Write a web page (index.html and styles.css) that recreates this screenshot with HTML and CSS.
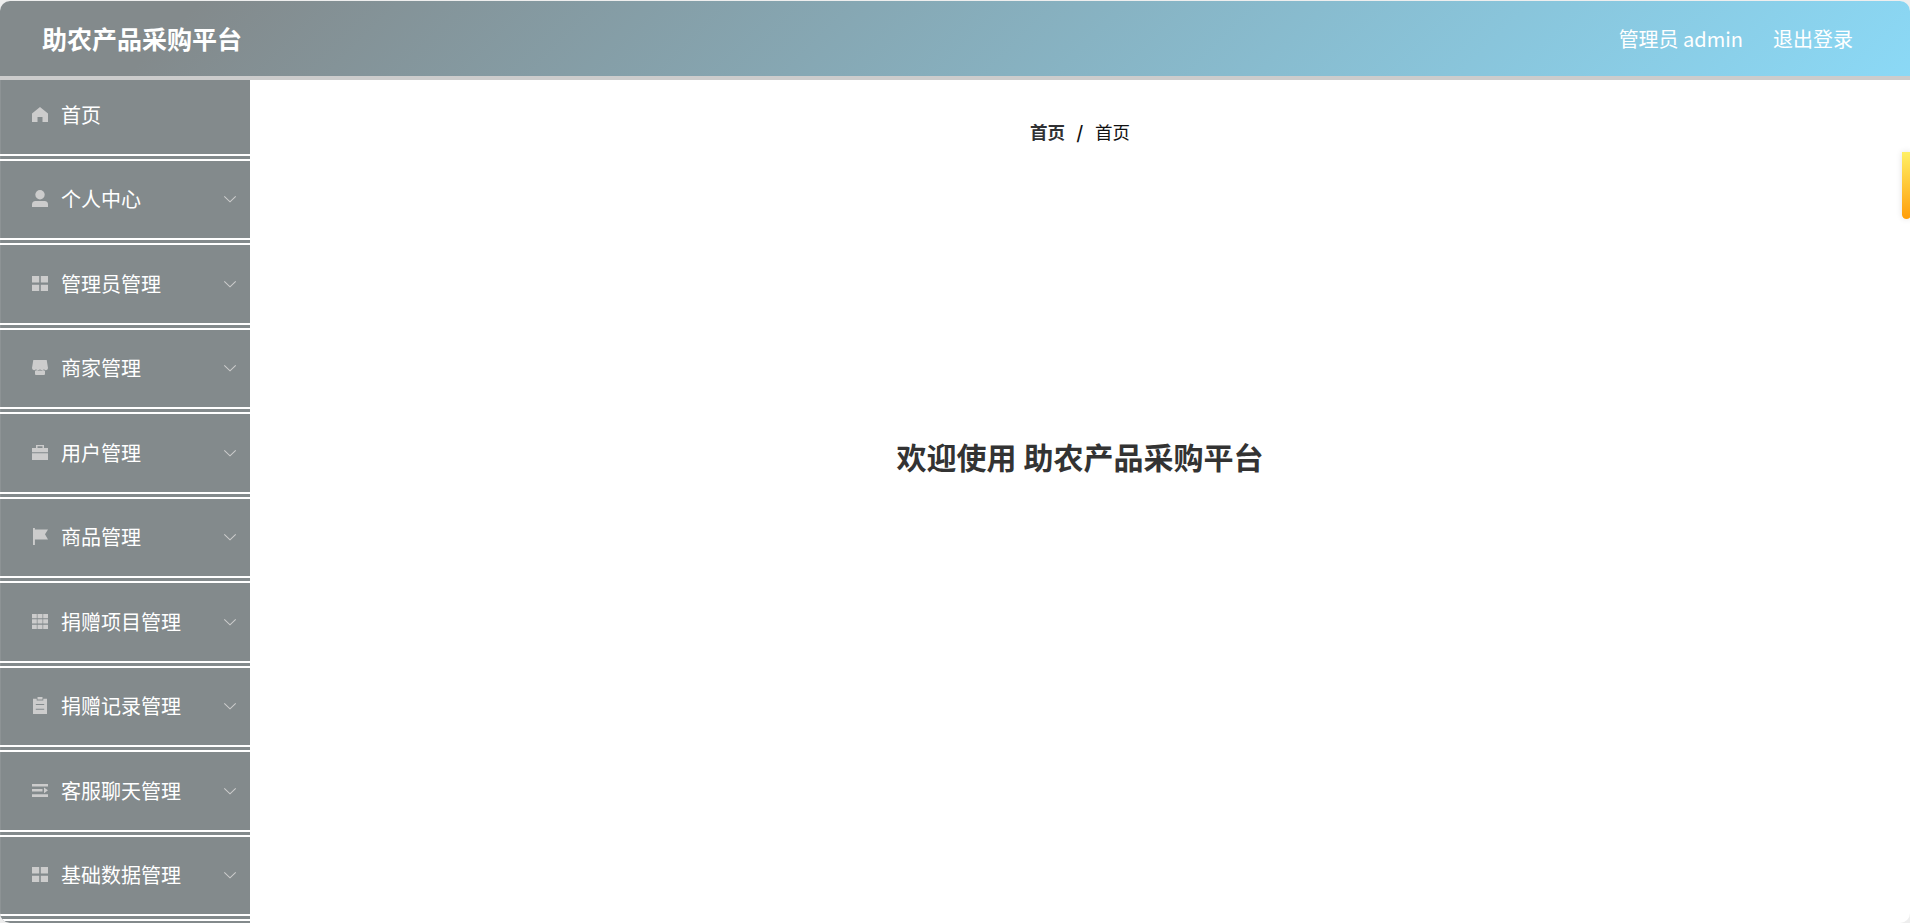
FILE: index.html
```
<!DOCTYPE html>
<html lang="zh-CN">
<head>
<meta charset="utf-8">
<title>助农产品采购平台</title>
<link rel="stylesheet" href="styles.css">
</head>
<body>
<svg class="defs" width="0" height="0">
  <symbol id="chev" viewBox="0 0 14 14"><path d="M1.3 4.4 7 9.8l5.7-5.4" fill="none" stroke="currentColor" stroke-width="1.1"/></symbol>
  <symbol id="grid" viewBox="0 0 18 18"><path d="M1 1h7.2v6.600H1zM9.800 1H17v6.600H9.800zM1 9.700h7.200V16H1zM9.800 9.700H17V16H9.800z"/></symbol>
</svg>
<div class="app">
  <header class="header">
    <h1 class="brand">助农产品采购平台</h1>
    <div class="user"><span>管理员 admin</span><span>退出登录</span></div>
  </header>
  <div class="body">
    <nav class="sidebar">
      <ul class="menu">
        <li class="item"><svg class="icon" viewBox="0 0 18 18"><path d="M9 1 17 7.500V16h-5.500v-5h-5v5H1V7.500z"/></svg><span>首页</span></li>
        <li class="item"><svg class="icon" viewBox="0 0 18 18"><circle cx="9" cy="4.800" r="4.700"/><path d="M1 17v-2.500q0-3.500 3.500-3.500h9q3.500 0 3.500 3.500V17z"/></svg><span>个人中心</span><svg class="arrow"><use href="#chev"/></svg></li>
        <li class="item"><svg class="icon" viewBox="0 0 18 18"><use href="#grid"/></svg><span>管理员管理</span><svg class="arrow"><use href="#chev"/></svg></li>
        <li class="item"><svg class="icon" viewBox="0 0 18 18"><path d="M2.300 1h13.400L17 9q0 2-2 2.200-1.200 0-2-.9-.8 1-2 1t-2-1q-.8 1-2 1t-2-1q-.8.9-2 .9Q1 11 1 9z"/><path d="M4 11.800q1.300 0 2-.700 1.500 1.300 3 .2 1.500 1.100 3-.2.700.7 2 .7V15q0 1-1 1H5q-1 0-1-1z"/></svg><span>商家管理</span><svg class="arrow"><use href="#chev"/></svg></li>
        <li class="item"><svg class="icon" viewBox="0 0 18 18"><path fill-rule="evenodd" d="M5 4V1h8v3h4v4.200H1V4zm1.500 0h5V2.300h-5zM1 9.300h16V16H1z"/></svg><span>用户管理</span><svg class="arrow"><use href="#chev"/></svg></li>
        <li class="item"><svg class="icon" viewBox="0 0 18 18"><path d="M2 0h1.900v1.500H17l-3 4.700 3 5.300H3.900V17H2z"/></svg><span>商品管理</span><svg class="arrow"><use href="#chev"/></svg></li>
        <li class="item"><svg class="icon" viewBox="0 0 18 18"><path d="M1 1h4.800v4.200H1zm5.500 0h5v4.200h-5zm5.700 0H17v4.200h-4.800zM1 6.200h4.800v4.300H1zm5.500 0h5v4.300h-5zm5.700 0H17v4.300h-4.800zM1 11.800h4.800V16H1zm5.500 0h5V16h-5zm5.700 0H17V16h-4.800z"/></svg><span>捐赠项目管理</span><svg class="arrow"><use href="#chev"/></svg></li>
        <li class="item"><svg class="icon" viewBox="0 0 18 18"><path fill-rule="evenodd" d="M2 1.700h3.700V3.400h6.600V1.700H16V17H2zM4.800 7v1h8.400V7zm0 4.700v1h8.400v-1z"/><path d="M6.500 0h5v2.500h-5z"/></svg><span>捐赠记录管理</span><svg class="arrow"><use href="#chev"/></svg></li>
        <li class="item"><svg class="icon" viewBox="0 0 18 18"><path d="M1 2h16v2.500H1zm0 5h10.500v2.500H1zm0 5.200h16V15H1zM13 5.400l4 2.900-4 2.900z"/></svg><span>客服聊天管理</span><svg class="arrow"><use href="#chev"/></svg></li>
        <li class="item"><svg class="icon" viewBox="0 0 18 18"><use href="#grid"/></svg><span>基础数据管理</span><svg class="arrow"><use href="#chev"/></svg></li>
        <li class="item"></li>
      </ul>
    </nav>
    <main class="main">
      <div class="crumbs"><b>首页</b><b class="sep">/</b><span>首页</span></div>
      <h2 class="welcome">欢迎使用 助农产品采购平台</h2>
    </main>
  </div>
  <div class="handle"></div>
</div>
</body>
</html>
```
FILE: styles.css
```
* { box-sizing: border-box; }
body { margin: 0; background: #eee; font-family: "Noto Sans CJK SC", sans-serif; overflow: hidden; }
.defs { position: absolute; }
.app { position: relative; height: 922px; margin-top: 1px; display: flex; flex-direction: column; background: #fff; border-radius: 10px; overflow: hidden; }
.header { height: 79px; flex: none; display: flex; align-items: center; justify-content: space-between; padding: 0 57px 0 42px; color: #fff; border-bottom: 4px solid #ccc; background: linear-gradient(135deg, #838a8c 10%, #8bd9f6 100%) border-box; }
.brand { margin: 0; padding-bottom: 2px; font-size: 25px; line-height: 36px; font-weight: 700; }
.user { display: flex; gap: 30px; font-size: 20px; line-height: 30px; }
.body { flex: 1; min-height: 0; display: flex; }
.sidebar { width: 250px; background: linear-gradient(90deg, #8d9395 1px, #838a8c 1px); overflow: hidden; }
.menu { list-style: none; margin: -3px 0 0; padding: 0; }
.item { height: 84px; display: flex; align-items: center; padding: 0 13px 1px 31px; color: #fff; font-size: 20px; line-height: 30px; border-bottom: 7px double #fff; }
.item:nth-child(odd) { height: 85px; }
.item:first-child { height: 84px; }
.icon { width: 18px; height: 18px; margin-right: 12px; fill: #ccc; }
.arrow { width: 14px; height: 14px; margin-left: auto; color: #ccc; }
.main { flex: 1; display: flex; flex-direction: column; align-items: center; color: #303133; }
.crumbs { display: flex; margin-top: 39px; font-size: 17.5px; line-height: 26px; color: #111; }
.crumbs b { color: #303133; }
.crumbs .sep { margin: 0 11.5px; color: #111; }
.welcome { margin: 289px 0 0; font-size: 30px; line-height: 44px; font-weight: 700; color: #333; }
.handle { position: absolute; right: -1px; top: 151px; width: 9px; height: 67px; border-radius: 0 0 5px 5px; background: linear-gradient(#fff065, #ff9d0a); box-shadow: 0 0 6px rgba(0,0,0,.12); }
```
